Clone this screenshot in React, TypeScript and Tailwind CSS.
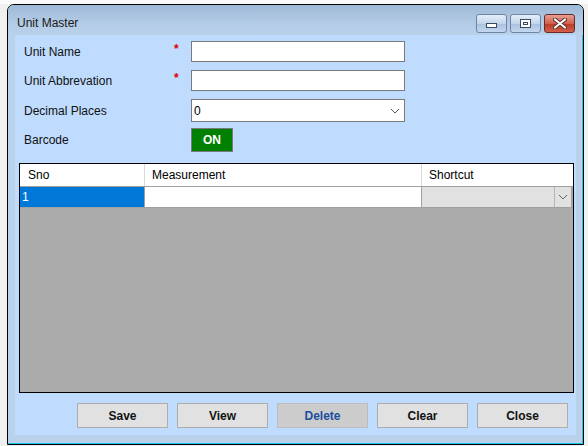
import React from "react";

const font = { fontFamily: '"Liberation Sans", Arial, sans-serif' };

function TitleButton({ kind }: { kind: "min" | "max" | "close" }) {
  if (kind === "close") {
    return (
      <div className="flex h-[19px] w-[31px] items-center justify-center rounded-[3px] border border-[#6b2a2a] bg-[linear-gradient(#e8a093,#d0604c_50%,#b83a26_51%,#d2604a)]">
        <svg width="14" height="11" viewBox="0 0 14 11">
          <path d="M2 1.5 L12 9.5 M12 1.5 L2 9.5" stroke="#5a2a2a" strokeWidth="4" strokeLinecap="round" />
          <path d="M2 1.5 L12 9.5 M12 1.5 L2 9.5" stroke="#ffffff" strokeWidth="2.2" strokeLinecap="round" />
        </svg>
      </div>
    );
  }
  return (
    <div className="flex h-[19px] w-[31px] items-center justify-center rounded-[3px] border border-[#6e84a3] bg-[linear-gradient(#e4eef9,#c3d5eb_50%,#a9c0de_51%,#c4d8ef)]">
      {kind === "min" ? (
        <div className="mt-[4px] h-[5px] w-[11px] border border-[#3b4a60] bg-white" />
      ) : (
        <div className="flex h-[9px] w-[11px] items-center justify-center border border-[#3b4a60] bg-white">
          <div className="h-[3px] w-[5px] border border-[#3b4a60]" />
        </div>
      )}
    </div>
  );
}

function Field({ label, required, children }: { label: string; required?: boolean; children: React.ReactNode }) {
  return (
    <div className="flex items-center">
      <div className="w-[159px] pl-[9px] text-[12px] leading-[14px] text-[#111]">{label}</div>
      <div className="mb-[6px] w-[17px] text-[12px] font-bold leading-[12px] text-[#e00000]">{required ? "*" : ""}</div>
      {children}
    </div>
  );
}

function Btn({ label, disabled }: { label: string; disabled?: boolean }) {
  return (
    <button
      type="button"
      className={
        disabled
          ? "h-[25px] w-[91px] border border-[#bcbcbc] bg-[#cccccc] text-[12px] font-bold text-[#1a4fa0]"
          : "h-[25px] w-[91px] border border-[#adadad] bg-[#e1e1e1] text-[12px] font-bold text-[#111]"
      }
    >
      {label}
    </button>
  );
}

export default function App() {
  return (
    <div className="relative h-[446px] w-[588px] overflow-hidden bg-[#f0f0f0] pl-[7px] pt-[4px]" style={font}>
      <div className="absolute left-0 top-0 h-[4px] w-[588px] bg-[#fafafa]" />
      <div className="relative flex h-[441px] w-[577px] flex-col rounded-t-[7px] border border-black bg-[#b9d1ea] shadow-[inset_-1px_-1px_0_#1ec8e8]">
        {/* title bar */}
        <div className="flex h-[30px] items-start rounded-t-[6px] bg-[linear-gradient(#9fb9d6,#b3cbe5_60%,#bad1ea)]">
          <div className="pl-[9px] pt-[11px] text-[12px] leading-[14px] text-[#1a1a1a]">Unit Master</div>
          <div className="ml-auto flex gap-[3px] pr-[8px] pt-[9px]">
            <TitleButton kind="min" />
            <TitleButton kind="max" />
            <TitleButton kind="close" />
          </div>
        </div>

        {/* client area */}
        <div className="ml-[7px] flex h-[400px] w-[561px] flex-col bg-[#bfdbfe]">
          <div className="mt-[6px] flex flex-col">
            <Field label="Unit Name" required>
              <div className="h-[21px] w-[214px] border border-[#7a7a7a] bg-white" />
            </Field>
            <div className="h-[8px]" />
            <Field label="Unit Abbrevation" required>
              <div className="h-[21px] w-[214px] border border-[#7a7a7a] bg-white" />
            </Field>
            <div className="h-[8px]" />
            <Field label="Decimal Places">
              <div className="flex h-[23px] w-[214px] items-center border border-[#7a7a7a] bg-white pl-[2px] text-[12px] text-black">
                0
                <svg className="ml-auto mr-[4px]" width="10" height="6" viewBox="0 0 10 6">
                  <path d="M1 1 L5 5 L9 1" stroke="#555" strokeWidth="1" fill="none" />
                </svg>
              </div>
            </Field>
            <div className="h-[6px]" />
            <Field label="Barcode">
              <div className="flex h-[24px] w-[42px] items-center justify-center border border-[#7a7a7a] bg-[#008000] text-[12px] font-bold text-white">
                ON
              </div>
            </Field>
          </div>

          {/* grid */}
          <div className="ml-[4px] mt-[11px] flex h-[230px] w-[555px] flex-col border border-black bg-[#ababab]">
            <div className="flex h-[22px] bg-white text-[12px] text-black">
              <div className="flex w-[125px] items-center border-r border-[#d9d9d9] pl-[8px]">Sno</div>
              <div className="flex w-[277px] items-center border-r border-[#d9d9d9] pl-[7px]">Measurement</div>
              <div className="flex flex-1 items-center pl-[7px]">Shortcut</div>
            </div>
            <div className="flex h-[22px] border-y border-[#a0a0a0] text-[12px]">
              <div className="flex w-[125px] items-center border-r border-[#a0a0a0] bg-[#0078d7] pl-[2px] text-white">1</div>
              <div className="w-[277px] border-r border-[#a0a0a0] bg-white" />
              <div className="flex w-[150px] items-center justify-end border-r border-[#a0a0a0] bg-[#e1e1e1]">
                <div className="flex h-full w-[17px] items-center justify-center border-l border-[#b5b5b5]">
                  <svg width="10" height="6" viewBox="0 0 10 6">
                    <path d="M1 1 L5 5 L9 1" stroke="#666" strokeWidth="1" fill="none" />
                  </svg>
                </div>
              </div>
            </div>
          </div>

          {/* buttons */}
          <div className="ml-[62px] mt-[10px] flex gap-[9px]">
            <Btn label="Save" />
            <Btn label="View" />
            <Btn label="Delete" disabled />
            <Btn label="Clear" />
            <Btn label="Close" />
          </div>
        </div>
      </div>
    </div>
  );
}
